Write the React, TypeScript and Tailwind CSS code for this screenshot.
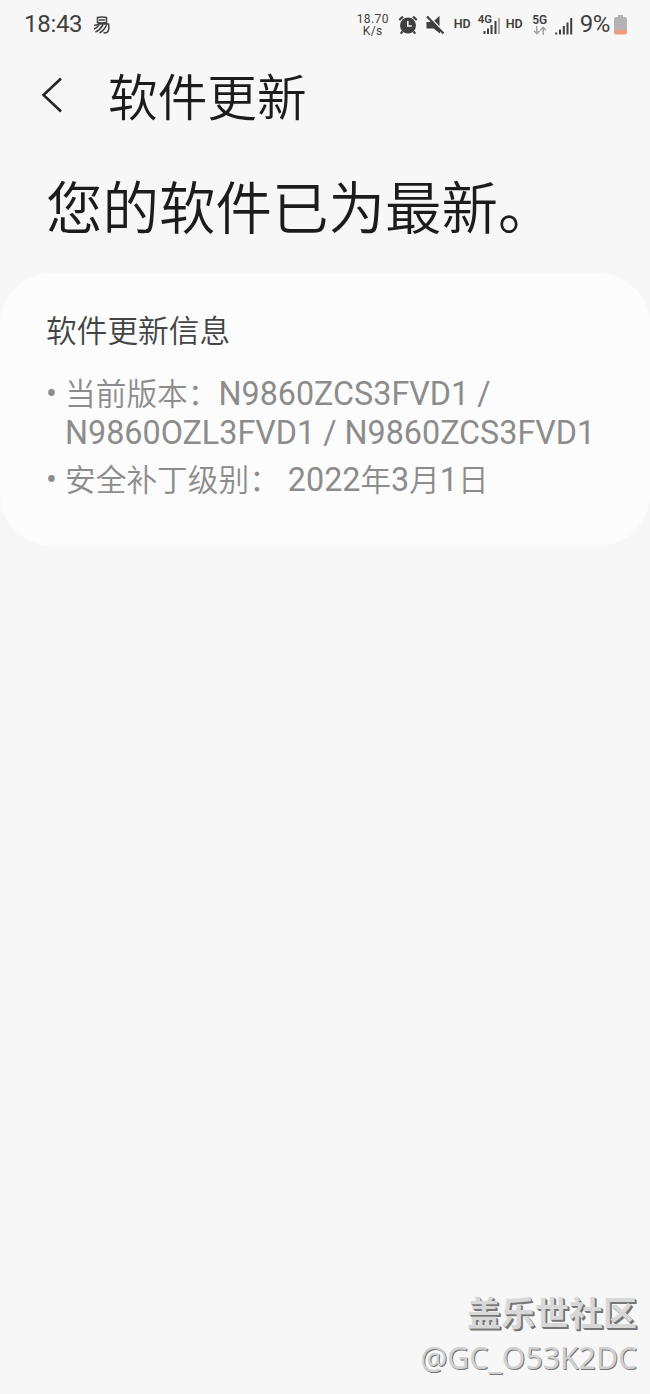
import React from "react";

function StatusBar() {
  return (
    <div className="flex h-[48px] items-center pl-[24px] pr-[23px] font-normal text-[#3f3f3f]">
      <span className="text-[24px] leading-[28px] tracking-[-0.3px]">18:43</span>
      <svg className="ml-[11px] mt-[2px]" width="18" height="18" viewBox="0 0 18 18" fill="none" stroke="#3f3f3f" strokeWidth="1.5">
        <path d="M4.500 1.500q4.500-1 9 0v5q-4.500 1-9 0zM6 4h6M1 9.500q3-.5 4.500-1.500h10q1.500 8-3 9l-2-.5M6 9q-2 3-5 4M10 9q-3 5-7.500 7M13.500 9q-2 5-7 8" />
      </svg>
      <div className="ml-auto flex items-center">
        <div className="mt-[2px] flex w-[34px] flex-col items-center text-[12px] leading-[12px] tracking-[0.4px]">
          <span>18.70</span>
          <span>K/s</span>
        </div>
        <svg className="ml-[8px] mt-[1px]" width="20" height="20" viewBox="0 0 20 20">
          <circle cx="10" cy="10.500" r="8" fill="#3f3f3f" />
          <path d="M1.200 5 5 1.600M18.800 5 15 1.600M4.400 16.500 2.800 18.600M15.600 16.500l1.600 2.100" stroke="#3f3f3f" strokeWidth="2.200" fill="none" />
          <path d="M9.800 6v5h4" stroke="#f7f7f7" strokeWidth="1.600" fill="none" />
        </svg>
        <svg className="ml-[8px] mt-[1px]" width="19" height="20" viewBox="0 0 19 20">
          <path d="M.5 7h5.300l8.200 8v3.500L7.500 13.500H.5zM8 6 13.500.8v11z" fill="#3f3f3f" />
          <path d="M2.300.3 18.300 17.300" stroke="#f7f7f7" strokeWidth="1.300" />
          <path d="M1 1.500 17.500 18.500" stroke="#3f3f3f" strokeWidth="2.200" />
        </svg>
        <span className="ml-[9px] mt-[1px] text-[12.500px] font-semibold">HD</span>
        <div className="relative ml-[7px] h-[22px] w-[24px]">
          <svg width="24" height="22" viewBox="0 0 24 22">
            <path d="M6.500 18v3M10 15.500v5.500M13.500 12v9M17.500 8v13" stroke="#3f3f3f" strokeWidth="2" />
            <path d="M21 5v16" stroke="#aaa" strokeWidth="2" />
          </svg>
          <span className="absolute left-0 top-[1px] text-[11.500px] leading-[11px] font-semibold">4G</span>
        </div>
        <span className="ml-[4px] mt-[1px] text-[12.500px] font-semibold">HD</span>
        <div className="ml-[9px] mt-[1px] flex w-[16px] flex-col items-center">
          <span className="text-[12px] leading-[12px] font-semibold">5G</span>
          <svg width="14" height="9" viewBox="0 0 14 9">
            <path d="M3.800 0v7.500M1 4.700l2.800 3 2.800-3M10.200 9V1.500M7.400 4.300l2.800-3 2.800 3" stroke="#a2a2a2" strokeWidth="1.500" fill="none" />
          </svg>
        </div>
        <svg className="ml-[7px] mt-[3px]" width="18" height="18" viewBox="0 0 18 18">
          <path d="M1.200 15.500v2M5 12.500v5M8.800 9v8.500M12.500 5.500v12M16.200 1v16.500" stroke="#3f3f3f" strokeWidth="2" />
        </svg>
        <span className="ml-[7px] text-[24px] leading-[28px] tracking-[-0.4px]">9%</span>
        <svg className="ml-[4px] mt-[1px]" width="13" height="20" viewBox="0 0 13 20">
          <path d="M4 0h5v2h2q2 0 2 2v11H0V4q0-2 2-2h2z" fill="#b4b4b4" />
          <path d="M0 15h13v2.500q0 2-2 2H2q-2 0-2-2z" fill="#f29a80" />
        </svg>
      </div>
    </div>
  );
}

export default function App() {
  return (
    <div
      lang="zh-CN"
      className="flex h-[1394px] w-[650px] flex-col overflow-hidden whitespace-nowrap bg-[#f7f7f7] font-[Roboto,'Noto_Sans_CJK_SC',sans-serif] font-[350]"
    >
      <StatusBar />
      <header className="flex h-[96px] items-center pl-[41px]">
        <svg className="-mt-[3px]" width="22" height="36" viewBox="0 0 22 36" fill="none">
          <path d="M20 1.500 2.500 18 20 34.500" stroke="#222" strokeWidth="2.500" />
        </svg>
        <h1 className="ml-[45px] mt-[6px] font-[350] text-[49.700px] leading-[60px] text-[#1c1c1c]">软件更新</h1>
      </header>
      <h2 className="mt-[26px] pl-[46px] font-[350] text-[56.500px] leading-[80px] text-[#1c1c1c]">您的软件已为最新。</h2>
      <section className="mt-[23px] h-[273px] rounded-[52px] bg-[#fcfcfc] pl-[46px] pt-[38px]">
        <h3 className="font-[350] text-[30.700px] leading-[42px] text-[#444]">软件更新信息</h3>
        <ul className="mt-[22px] text-[32.300px] leading-[39px] font-normal text-[#8c8c8c]">
          <li className="flex">
            <span className="w-[19px]">•</span>
            <div>
              <p><span className="font-[350] text-[30.700px]">当前版本：</span>N9860ZCS3FVD1 /</p>
              <p>N9860OZL3FVD1 / N9860ZCS3FVD1</p>
            </div>
          </li>
          <li className="mt-[8px] flex">
            <span className="w-[19px]">•</span>
            <p><span className="font-[350] text-[30.700px]">安全补丁级别：</span> 2022<span className="font-[350] text-[30.600px]">年</span>3<span className="font-[350] text-[30.600px]">月</span>1<span className="font-[350] text-[30.600px]">日</span></p>
          </li>
        </ul>
      </section>
      <footer className="mt-auto flex flex-col items-end pb-[15px] pr-[13px]">
        <span className="text-[34px] leading-[46px] font-bold text-[#d8d8d8] [text-shadow:1px_1px_0_#777,2px_2px_0_#777]">盖乐世社区</span>
        <span className="font-['Noto_Sans',sans-serif] text-[30.200px] leading-[42px] font-normal text-[#d0d0d0] [text-shadow:1px_1px_0_#777]">@GC_O53K2DC</span>
      </footer>
    </div>
  );
}
